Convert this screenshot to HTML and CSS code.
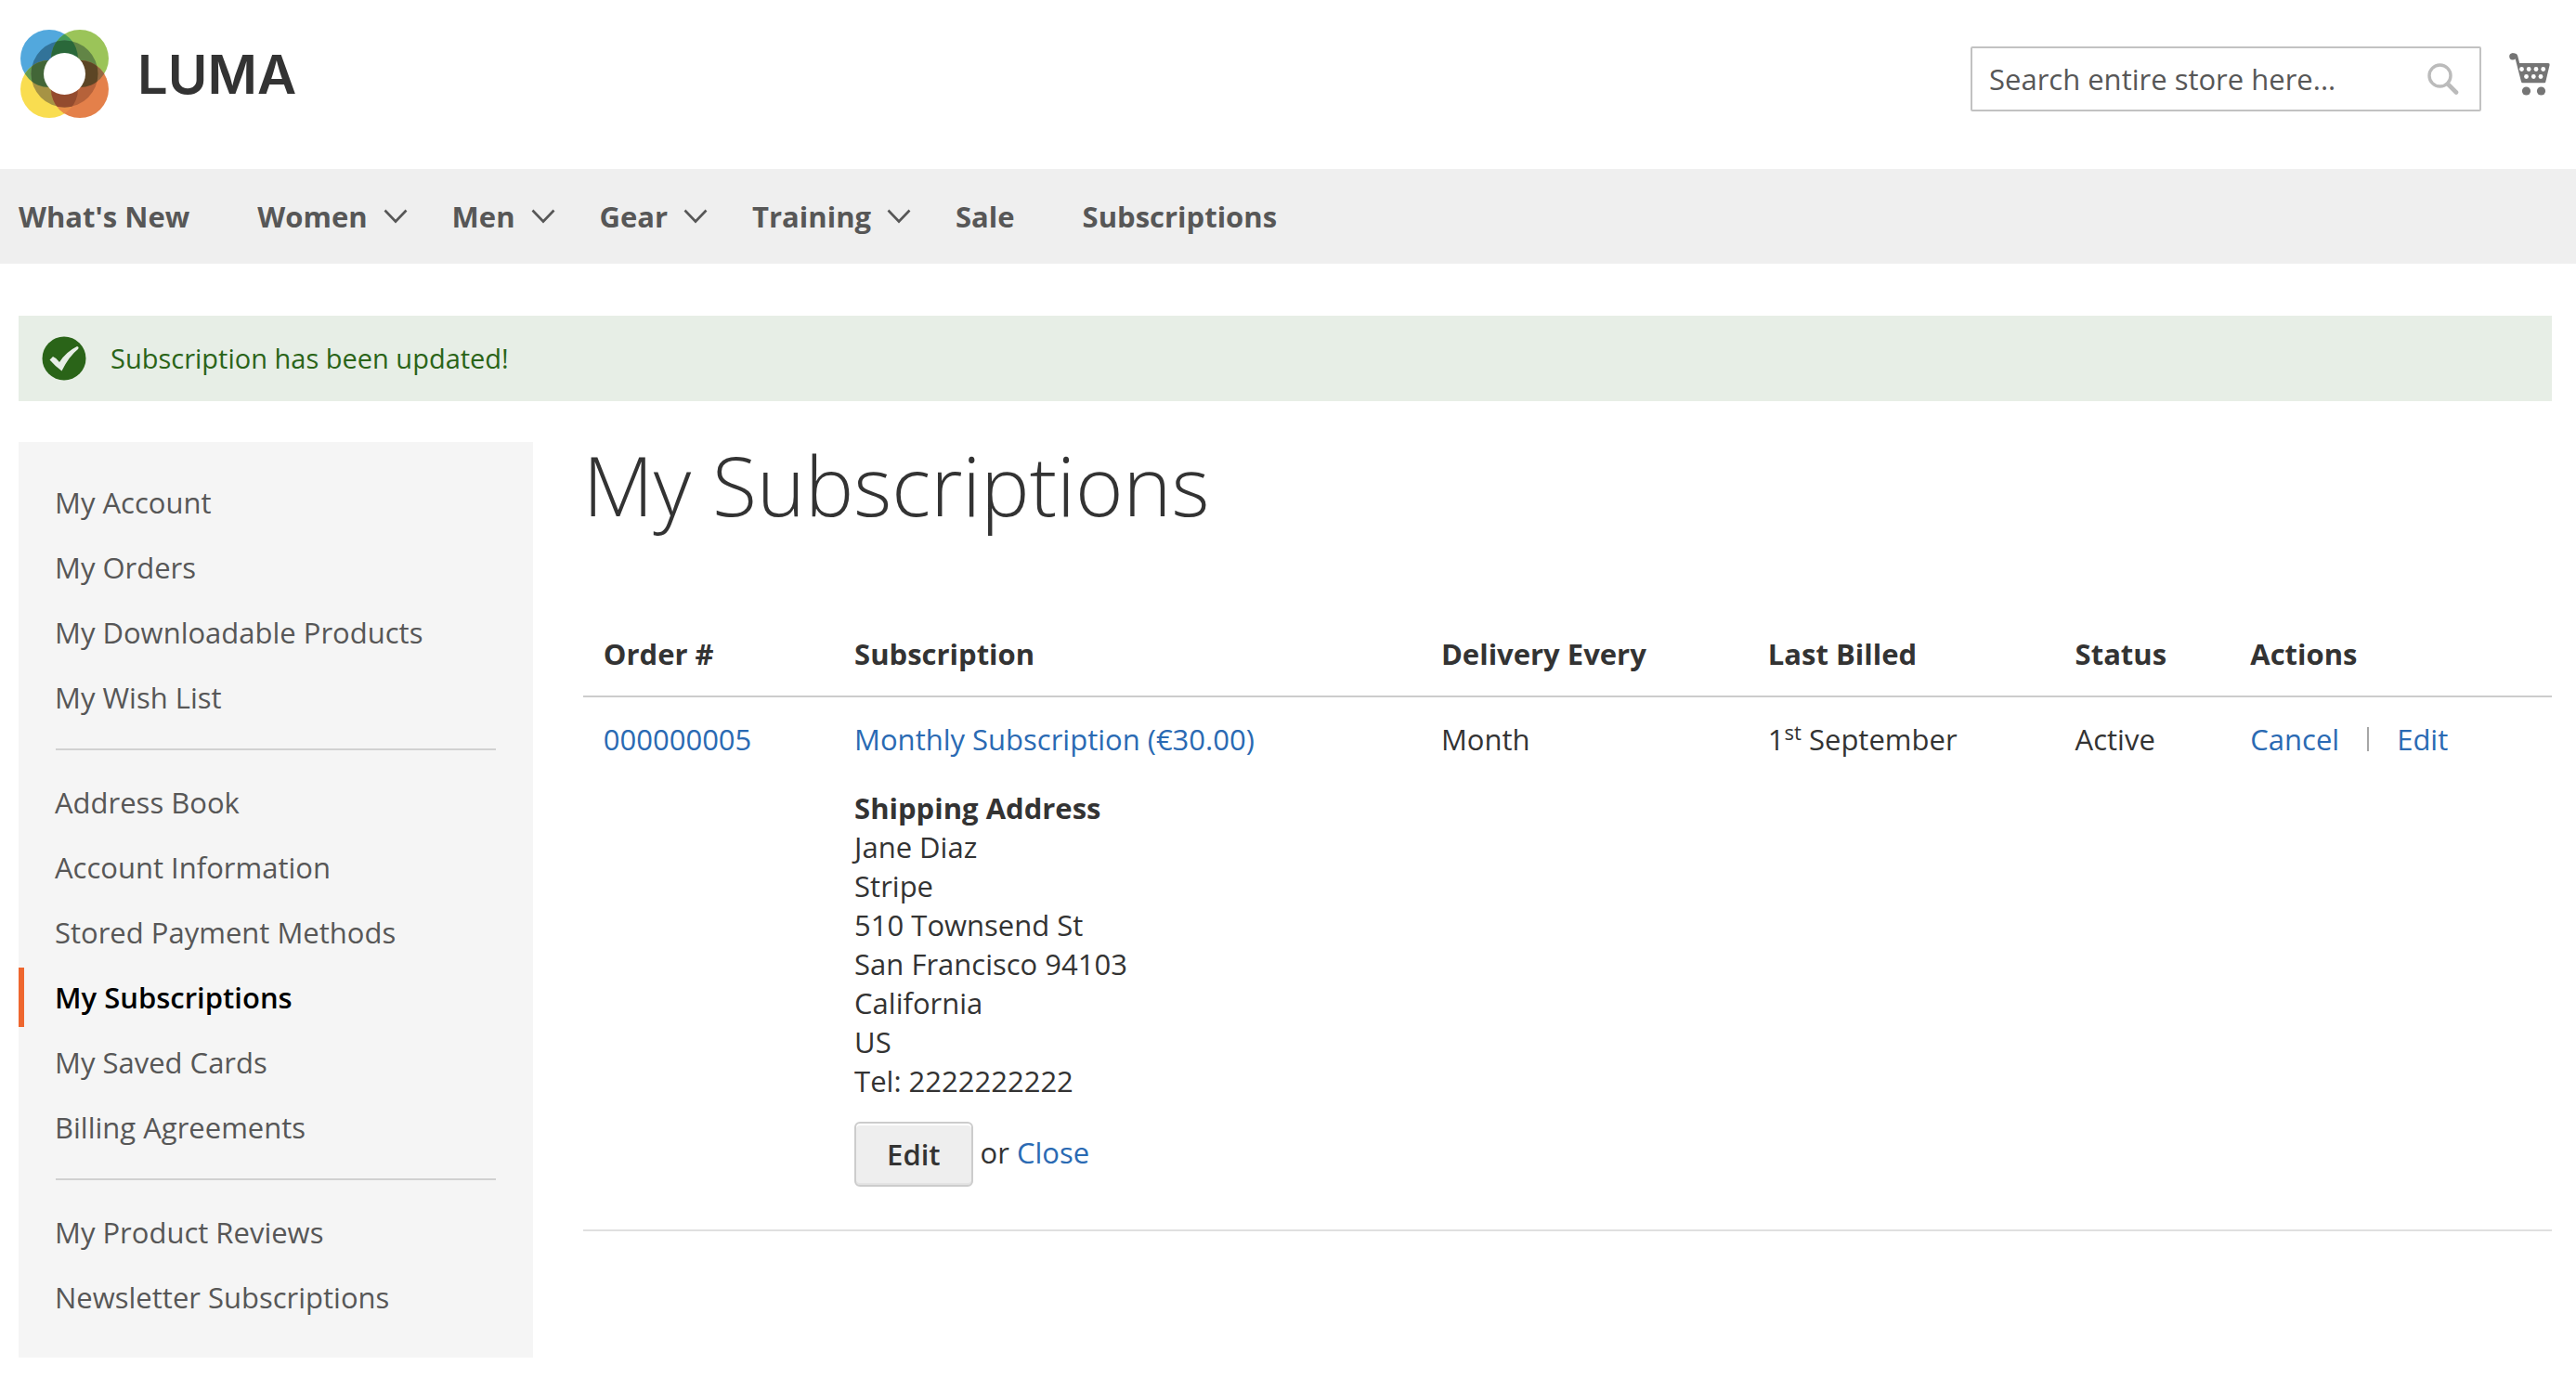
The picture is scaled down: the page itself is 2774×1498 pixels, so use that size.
FILE: index.html
```html
<!DOCTYPE html>
<html lang="en">
<head>
<meta charset="utf-8">
<title>My Subscriptions</title>
<link rel="stylesheet" href="styles.css">
</head>
<body>
<svg class="sprite" aria-hidden="true">
  <symbol id="chevron" viewBox="0 0 26 16"><path d="M1.500 1.500L13 13.500L24.500 1.500" fill="none" stroke="currentColor" stroke-width="2.600"/></symbol>
</svg>
<header class="header">
  <a class="logo" href="#" aria-label="Luma">
    <svg class="logo-mark" viewBox="0 0 96 96" aria-hidden="true">
      <defs>
        <clipPath id="tl"><circle cx="31" cy="31" r="31"/></clipPath>
        <clipPath id="br"><circle cx="64" cy="64" r="31"/></clipPath>
        <clipPath id="mid"><circle cx="47.500" cy="47.500" r="36"/></clipPath>
      </defs>
      <circle cx="31" cy="31" r="31" fill="#52a8dd"/>
      <circle cx="64" cy="31" r="31" fill="#9bc459"/>
      <circle cx="31" cy="64" r="31" fill="#f9dd50"/>
      <circle cx="64" cy="64" r="31" fill="#e4804a"/>
      <circle cx="64" cy="31" r="31" fill="#459a57" clip-path="url(#tl)"/>
      <circle cx="31" cy="64" r="31" fill="#639a50" clip-path="url(#tl)"/>
      <circle cx="31" cy="64" r="31" fill="#e98d48" clip-path="url(#br)"/>
      <circle cx="64" cy="31" r="31" fill="#936843" clip-path="url(#br)"/>
      <g clip-path="url(#mid)">
        <circle cx="31" cy="31" r="31" fill="#327399"/>
        <circle cx="64" cy="31" r="31" fill="#628546"/>
        <circle cx="31" cy="64" r="31" fill="#a69344"/>
        <circle cx="64" cy="64" r="31" fill="#b6623a"/>
        <circle cx="64" cy="31" r="31" fill="#2a683a" clip-path="url(#tl)"/>
        <circle cx="31" cy="64" r="31" fill="#426637" clip-path="url(#tl)"/>
        <circle cx="31" cy="64" r="31" fill="#944b2e" clip-path="url(#br)"/>
        <circle cx="64" cy="31" r="31" fill="#5c4525" clip-path="url(#br)"/>
      </g>
      <circle cx="47.500" cy="47.500" r="22.500" fill="#fff"/>
    </svg>
    <span class="logo-name">LUMA</span>
  </a>
  <form class="search">
    <input class="search-input" type="search" aria-label="Search" placeholder="Search entire store here...">
    <button class="search-button" type="button" aria-label="Search">
      <svg class="search-icon" viewBox="0 0 34 34" aria-hidden="true"><circle cx="13.500" cy="13.500" r="11.500" fill="none" stroke="#bbb" stroke-width="3.400"/><path d="M22 22.500L31 31.500" stroke="#bbb" stroke-width="4.600" stroke-linecap="round"/></svg>
    </button>
  </form>
  <a class="cart" href="#" aria-label="My Cart">
    <svg class="cart-icon" viewBox="0 0 44 46" aria-hidden="true">
      <g fill="#757575"><circle cx="3.800" cy="3.800" r="3.600"/><path d="M3 .5H6Q8.500.5 9.300 3.500L11.200 11H42Q44 11 43.600 13L39.200 31.500Q39 32.300 38 32.300H14.500Q13.300 32.300 13 31L6.700 6.500L3 6Z"/><circle cx="18.500" cy="41" r="4.600"/><circle cx="34.500" cy="41" r="4.600"/></g>
      <g fill="#fff"><circle cx="13.500" cy="17.500" r="2.400"/><circle cx="21.200" cy="17.500" r="2.400"/><circle cx="29" cy="17.500" r="2.400"/><circle cx="36.700" cy="17.500" r="2.400"/><circle cx="18.500" cy="25.500" r="2.400"/><circle cx="26.300" cy="25.500" r="2.400"/><circle cx="34" cy="25.500" r="2.400"/></g>
    </svg>
  </a>
</header>
<nav class="nav" aria-label="Main">
  <a class="nav-item" href="#">What's New</a>
  <a class="nav-item nav-parent" href="#">Women<svg class="chevron"><use href="#chevron"/></svg></a>
  <a class="nav-item nav-parent" href="#">Men<svg class="chevron"><use href="#chevron"/></svg></a>
  <a class="nav-item nav-parent" href="#">Gear<svg class="chevron"><use href="#chevron"/></svg></a>
  <a class="nav-item nav-parent" href="#">Training<svg class="chevron"><use href="#chevron"/></svg></a>
  <a class="nav-item" href="#">Sale</a>
  <a class="nav-item" href="#">Subscriptions</a>
</nav>
<div class="page">
  <div class="message" role="status">
    <svg class="message-icon" viewBox="0 0 48 48" aria-hidden="true"><circle cx="24" cy="24" r="23.500" fill="#2a6418"/><path d="M8.500 25.500L12 22Q16 23.500 19 28Q26 17 38 11Q40.500 11.500 39 14Q29 22 21.500 37.500Q15 33 8.500 25.500Z" fill="#e7eee6"/></svg>
    <span>Subscription has been updated!</span>
  </div>
  <div class="columns">
    <aside class="sidebar">
      <ul class="side-list">
        <li><a class="side-link" href="#">My Account</a></li>
        <li><a class="side-link" href="#">My Orders</a></li>
        <li><a class="side-link" href="#">My Downloadable Products</a></li>
        <li><a class="side-link" href="#">My Wish List</a></li>
      </ul>
      <ul class="side-list">
        <li><a class="side-link" href="#">Address Book</a></li>
        <li><a class="side-link" href="#">Account Information</a></li>
        <li><a class="side-link" href="#">Stored Payment Methods</a></li>
        <li><a class="side-link side-current" href="#" aria-current="page">My Subscriptions</a></li>
        <li><a class="side-link" href="#">My Saved Cards</a></li>
        <li><a class="side-link" href="#">Billing Agreements</a></li>
      </ul>
      <ul class="side-list">
        <li><a class="side-link" href="#">My Product Reviews</a></li>
        <li><a class="side-link" href="#">Newsletter Subscriptions</a></li>
      </ul>
    </aside>
    <main class="main">
      <h1 class="title">My Subscriptions</h1>
      <table class="orders">
        <colgroup><col class="c-order"><col class="c-sub"><col class="c-every"><col class="c-billed"><col class="c-status"><col></colgroup>
        <thead>
          <tr><th>Order #</th><th>Subscription</th><th>Delivery Every</th><th>Last Billed</th><th>Status</th><th>Actions</th></tr>
        </thead>
        <tbody>
          <tr>
            <td><a href="#">000000005</a></td>
            <td>
              <a href="#">Monthly Subscription (€30.00)</a>
              <address class="address"><strong>Shipping Address</strong><br>Jane Diaz<br>Stripe<br>510 Townsend St<br>San Francisco 94103<br>California<br>US<br>Tel: 2222222222</address>
              <div class="row-tools"><button class="button" type="button">Edit</button><span class="row-alt">or <a href="#">Close</a></span></div>
            </td>
            <td>Month</td>
            <td>1<sup class="sup">st</sup> September</td>
            <td>Active</td>
            <td><div class="actions"><a href="#">Cancel</a><a class="action-next" href="#">Edit</a></div></td>
          </tr>
        </tbody>
      </table>
    </main>
  </div>
</div>
</body>
</html>
```
FILE: styles.css
```css
* { box-sizing: border-box; }
body {
  margin: 0;
  background: #fff;
  color: #333;
  font: 400 31px/42px "Open Sans", sans-serif;
}
a { color: #2a6ab3; text-decoration: none; }
.sprite { display: none; }

.header {
  display: flex;
  align-items: center;
  height: 182px;
  padding: 0 28px 22px 22px;
}
.logo { display: flex; align-items: center; gap: 30px; margin-right: auto; }
.logo-mark { width: 96px; height: 96px; }
.logo-name { color: #333; font: 600 58px/60px Inter, sans-serif; }
.search {
  display: flex;
  align-items: center;
  width: 550px;
  height: 70px;
  margin: 10px 30px 0 0;
  border: 2px solid #c2c2c2;
  border-radius: 2px;
}
.search-input {
  flex: 1;
  min-width: 0;
  border: 0;
  padding: 0 0 0 18px;
  background: none;
  font: inherit;
}
.search-input::placeholder { color: #575757; opacity: 1; }
.search-button { display: flex; border: 0; padding: 0 22px 0 0; background: none; }
.search-icon { width: 34px; height: 34px; }
.cart { display: flex; }
.cart-icon { width: 44px; height: 46px; }

.nav {
  display: flex;
  align-items: center;
  height: 102px;
  padding: 0 20px;
  background: #efefef;
  font-weight: 700;
}
.nav-item { display: flex; align-items: center; margin-right: 73px; color: #575757; }
.nav-parent { margin-right: 48px; }
.chevron { width: 26px; height: 16px; margin-left: 17px; }

.page { padding: 56px 26px 36px 20px; }
.message {
  display: flex;
  align-items: center;
  gap: 26px;
  height: 92px;
  padding: 0 25px;
  background: #e7eee6;
  color: #2a6418;
  font-size: 29px;
}
.message-icon { width: 48px; height: 48px; }
.columns {
  display: grid;
  grid-template-columns: 20.3% minmax(0, 1fr);
  align-items: start;
  gap: 54px;
  margin-top: 44px;
}
.sidebar { padding: 33px 0; background: #f5f5f5; }
.side-list { display: grid; gap: 6px; margin: 0; padding: 0; list-style: none; }
.side-list + .side-list::before {
  content: "";
  height: 2px;
  margin: 23px 40px 18px;
  background: #d1d1d1;
}
.side-link {
  display: block;
  padding: 11px 33px;
  border-left: 6px solid transparent;
  color: #575757;
}
.side-current { border-color: #ee672f; color: #000; font-weight: 600; }

.title { margin: 0; font-size: 88px; line-height: 92px; font-weight: 300; }
.orders { width: 100%; margin-top: 91px; border-collapse: collapse; table-layout: fixed; }
.c-order { width: 12.75%; }
.c-sub { width: 29.8%; }
.c-every { width: 16.6%; }
.c-billed { width: 15.6%; }
.c-status { width: 8.9%; }
.orders th, .orders td { padding: 24px 22px; text-align: left; vertical-align: top; }
.orders th { border-bottom: 2px solid #ccc; font-weight: 700; }
.orders td { border-bottom: 2px solid #e0e0e0; }
.address { margin: 32px 0 23px; font-style: normal; }
.row-tools { display: flex; align-items: center; gap: 8px; padding-bottom: 22px; }
.row-alt { padding-bottom: 4px; }
.button {
  height: 70px;
  padding: 0 33px;
  border: 2px solid #ccc;
  border-radius: 6px;
  background: #eee;
  box-shadow: inset 0 2px 0 #fff, inset 0 -2px 0 #e3e3e3;
  color: #333;
  font: inherit;
  font-weight: 600;
}
.sup { font-size: 22px; line-height: 0; }
.actions { display: flex; align-items: center; }
.action-next { position: relative; margin-left: 62px; }
.action-next::before {
  content: "";
  position: absolute;
  left: -32px;
  top: 8px;
  width: 2px;
  height: 26px;
  background: #a6a6a6;
}
```
